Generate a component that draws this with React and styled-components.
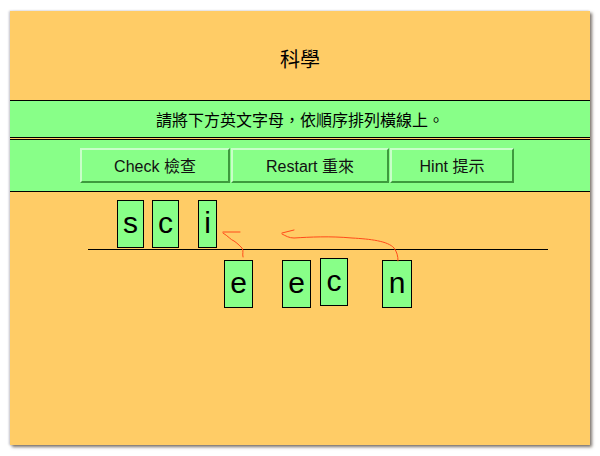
import React from "react";
import styled, { createGlobalStyle } from "styled-components";

const Global = createGlobalStyle`
  html, body { margin: 0; padding: 0; background: #ffffff; }
  body { font-family: "Liberation Sans", "Noto Sans CJK TC", Arial, sans-serif; }
`;

const Page = styled.div`
  width: 600px;
  height: 456px;
  padding: 11px 0 0 10px;
  box-sizing: border-box;
`;

const Panel = styled.div`
  width: 580px;
  height: 434px;
  background: #ffcc66;
  box-shadow: 2px 2px 3px rgba(80, 70, 60, 0.75), -1px 0 2px rgba(120, 120, 140, 0.4);
  display: flex;
  flex-direction: column;
`;

const Title = styled.div`
  height: 90px;
  flex-shrink: 0;
  display: flex;
  align-items: center;
  justify-content: center;
  padding-top: 6px;
  box-sizing: border-box;
  font-size: 20px;
  color: #000;
  border-bottom: 1px solid #000;
`;

const Band = styled.div`
  background: #88ff88;
  flex-shrink: 0;
  display: flex;
  align-items: center;
  justify-content: center;
  height: ${(p) => p.$h}px;
  border-bottom: 1px solid #000;
  border-top: ${(p) => (p.$top ? "1px solid #000" : "none")};
  margin-top: ${(p) => (p.$top ? "1px" : "0")};
  box-sizing: border-box;
`;

const Instruction = styled.span`
  font-size: 16px;
  color: #000;
`;

const Buttons = styled.div`
  display: flex;
  gap: 1px;
  margin-left: -6px;
  margin-top: 0px;
`;

const Btn = styled.button`
  width: ${(p) => p.$w}px;
  height: 35px;
  background: #88ff88;
  font-family: "Liberation Sans", "Noto Sans CJK TC", Arial, sans-serif;
  font-size: 16px;
  color: #111;
  border: 2px solid;
  border-color: #c8ffc8 #3e9a3e #3e9a3e #c8ffc8;
  padding: 0 0 2px;
  cursor: pointer;
`;

const Game = styled.div`
  position: relative;
  flex: 1;
`;

const BaseLine = styled.div`
  position: absolute;
  left: 78px;
  top: 57px;
  width: 460px;
  height: 1px;
  background: #000;
`;

const Tile = styled.div`
  position: absolute;
  box-sizing: border-box;
  height: 48px;
  background: #88ff88;
  border: 1px solid #000;
  display: flex;
  align-items: center;
  justify-content: center;
  font-size: 30px;
  color: #000;
  padding-bottom: 3px;
`;

const Arrows = styled.svg`
  position: absolute;
  left: 0;
  top: 0;
  pointer-events: none;
`;

const tiles = [
  { ch: "s", x: 107, y: 8, w: 27 },
  { ch: "c", x: 142, y: 8, w: 27 },
  { ch: "i", x: 188, y: 8, w: 19 },
  { ch: "e", x: 214, y: 68, w: 29 },
  { ch: "e", x: 272, y: 68, w: 29 },
  { ch: "c", x: 310, y: 66, w: 28 },
  { ch: "n", x: 372, y: 68, w: 30 },
];

export default function App() {
  return (
    <>
      <Global />
      <Page>
        <Panel>
          <Title>科學</Title>
          <Band $h={37}>
            <Instruction>請將下方英文字母，依順序排列橫線上。</Instruction>
          </Band>
          <Band $h={53} $top>
            <Buttons>
              <Btn $w={150}>Check 檢查</Btn>
              <Btn $w={158}>Restart 重來</Btn>
              <Btn $w={124}>Hint 提示</Btn>
            </Buttons>
          </Band>
          <Game>
            <BaseLine />
            {tiles.map((t, i) => (
              <Tile key={i} style={{ left: t.x, top: t.y, width: t.w }}>
                {t.ch}
              </Tile>
            ))}
            <Arrows width="580" height="253" viewBox="10 192 580 253">
              <g fill="none" stroke="#ff4a1a" strokeWidth="1" strokeLinecap="round" strokeLinejoin="round">
                <path d="M223 232 L240 232" />
                <path d="M223 233 C228 236 231 240 234 241 C237 243 239 245 242 248 C244 251 242 254 243 257" />
                <path d="M282 233 L294 230" />
                <path d="M282 234 C286 236 289 238 294 238 C310 237 330 236 352 238 C370 239 388 241 394 248 C397 252 398 256 398 261" />
              </g>
            </Arrows>
          </Game>
        </Panel>
      </Page>
    </>
  );
}
